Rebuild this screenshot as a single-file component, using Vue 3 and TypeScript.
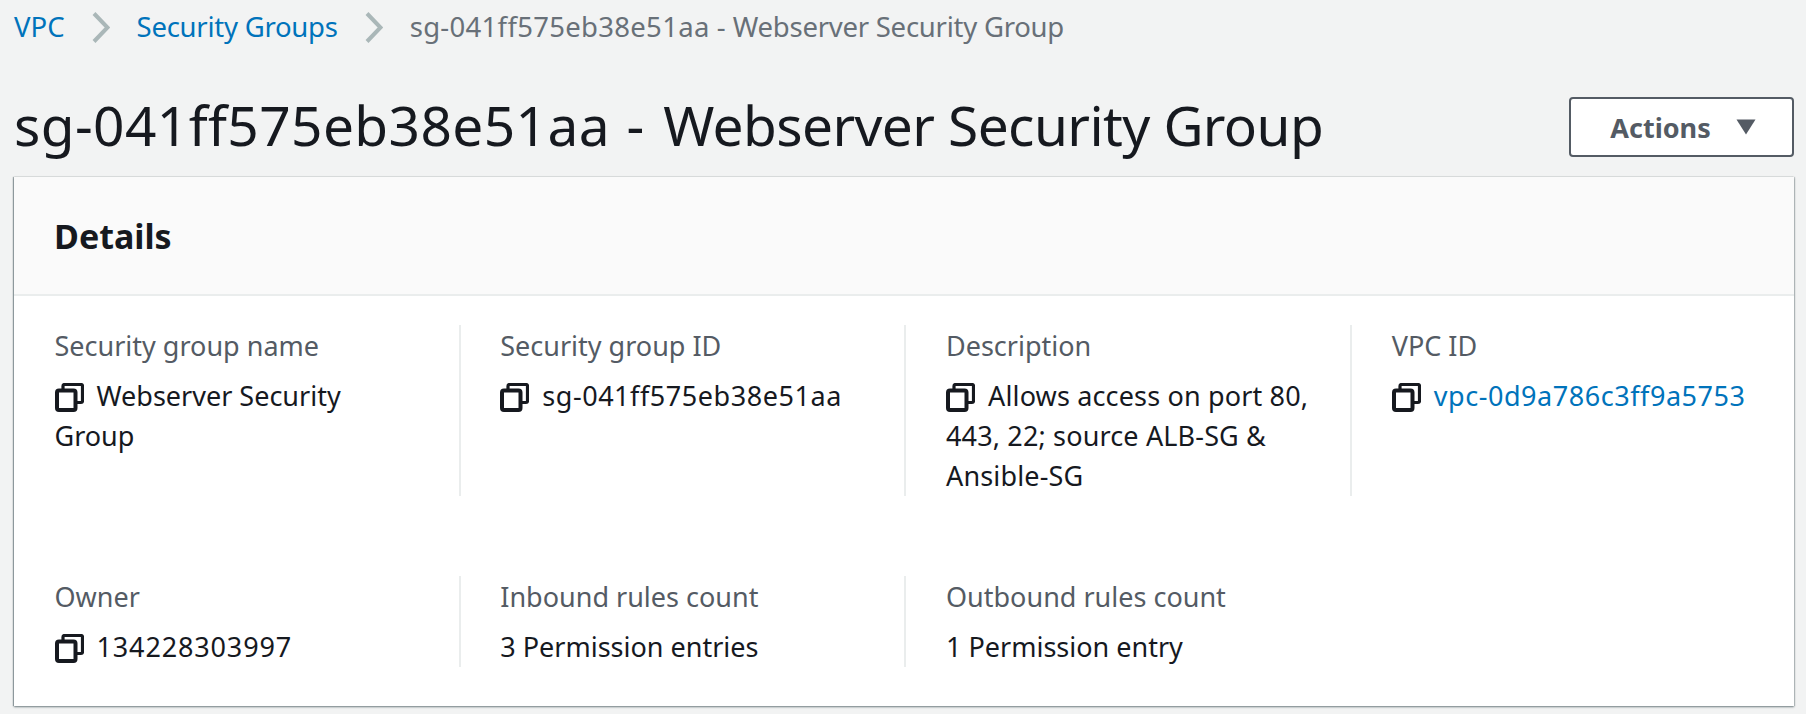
<script setup lang="ts">
interface Cell {
  label: string
  lines: string
  copy?: boolean
  link?: boolean
  track?: string
}
const rowOne: Cell[] = [
  { label: 'Security group name', lines: 'Webserver Security Group', copy: true },
  { label: 'Security group ID', lines: 'sg-041ff575eb38e51aa', copy: true, track: 'track-id' },
  { label: 'Description', lines: 'Allows access on port 80, 443, 22; source ALB-SG & Ansible-SG', copy: true, track: 'track-text' },
  { label: 'VPC ID', lines: 'vpc-0d9a786c3ff9a5753', copy: true, link: true, track: 'track-id' },
]
const rowTwo: Cell[] = [
  { label: 'Owner', lines: '134228303997', copy: true, track: 'track-num' },
  { label: 'Inbound rules count', lines: '3 Permission entries' },
  { label: 'Outbound rules count', lines: '1 Permission entry' },
]
const rows = [
  { cells: rowOne, cls: 'row-one' },
  { cells: rowTwo, cls: 'row-two' },
]
</script>

<template>
  <div class="page">
    <nav class="crumbs">
      <a class="link">VPC</a>
      <svg class="chev" width="18" height="31" viewBox="0 0 18 31"><path d="M2 1.500 15.500 15.500 2 29.500" fill="none" stroke="#aab7b8" stroke-width="4" /></svg>
      <a class="link tight">Security Groups</a>
      <svg class="chev" width="18" height="31" viewBox="0 0 18 31"><path d="M2 1.500 15.500 15.500 2 29.500" fill="none" stroke="#aab7b8" stroke-width="4" /></svg>
      <span class="current"><span class="crumb-id">sg-041ff575eb38e51aa</span> - <span class="tight">Webserver Security Group</span></span>
    </nav>
    <header class="head">
      <h1><span class="title-id">sg-041ff575eb38e51aa</span><span class="title-dash"> - </span><span class="title-name">Webserver Security Group</span></h1>
      <button class="actions">
        <span>Actions</span>
        <svg width="20" height="16" viewBox="0 0 20 16"><path d="M0.500 0.500H19.500L10 15.500Z" fill="#545b64" /></svg>
      </button>
    </header>
    <section class="card">
      <div class="card-head"><h2>Details</h2></div>
      <div class="card-body">
        <div v-for="row in rows" :key="row.cls" class="row" :class="row.cls">
          <div v-for="cell in row.cells" :key="cell.label" class="cell">
            <div class="label">{{ cell.label }}</div>
            <div class="value" :class="[{ link: cell.link }, cell.track]">
              <svg v-if="cell.copy" class="copy" width="29" height="29" viewBox="0 0 29 29">
                <path d="M8 6V3A1.500 1.500 0 0 1 9.500 1.500H26A1.500 1.500 0 0 1 27.500 3V18A1.500 1.500 0 0 1 26 19.500H22" fill="none" stroke="#16191f" stroke-width="3.200" />
                <rect x="2" y="7.500" width="18.500" height="19.500" rx="2" fill="none" stroke="#16191f" stroke-width="4" />
              </svg>{{ cell.lines }}
            </div>
          </div>
        </div>
      </div>
    </section>
  </div>
</template>

<style>
html, body { margin: 0; background: #f2f3f3; }
</style>

<style scoped>
.page {
  width: 1806px;
  height: 714px;
  overflow: hidden;
  background: #f2f3f3;
  font-family: "Noto Sans", "Open Sans", sans-serif;
  color: #16191f;
  box-sizing: border-box;
}
.crumbs {
  display: flex;
  align-items: center;
  height: 30px;
  padding: 12px 0 0 14px;
  font-size: 27.500px;
  line-height: 30px;
}
.link { color: #0073bb; }
.tight { letter-spacing: -0.250px; }
.crumb-id { letter-spacing: 0.300px; }
.chev { margin: 0 27px; flex: none; }
.current { color: #687078; white-space: pre-wrap; }
.head {
  display: flex;
  justify-content: space-between;
  align-items: center;
  padding: 54px 12px 0 14px;
  height: 62px;
}
h1 {
  margin: 0;
  font-size: 55px;
  font-weight: 400;
  line-height: 62px;
  white-space: pre;
  position: relative;
  top: -2px;
}
.title-id { letter-spacing: 0.400px; }
.title-dash { letter-spacing: 2.300px; }
.title-name { letter-spacing: -0.600px; }
.actions {
  display: flex;
  align-items: center;
  justify-content: center;
  gap: 25px;
  box-sizing: border-box;
  width: 225px;
  height: 60px;
  background: #fff;
  border: 2px solid #545b64;
  border-radius: 4px;
  font: 700 27px "Noto Sans", sans-serif;
  color: #545b64;
  padding: 0 0 0 3px;
}
.card {
  margin: 19px 12px 0 14px;
  background: #fff;
  box-shadow: 0 1px 2px rgba(0, 28, 36, 0.5), 1px 0 1px rgba(0, 28, 36, 0.15), -1px 0 1px rgba(0, 28, 36, 0.3);
  height: 529px;
}
.card-head {
  height: 119px;
  background: #fafafa;
  border-bottom: 2px solid #eaeded;
  box-sizing: border-box;
  display: flex;
  align-items: center;
  padding-left: 40px;
}
h2 { margin: 0; font-size: 34px; font-weight: 700; }
.card-body { padding: 0 0 0 40.500px; }
.row { display: grid; grid-template-columns: repeat(4, 406px); column-gap: 39.750px; }
.row-one { padding-top: 29px; height: 171px; }
.row-two { padding-top: 80px; height: 90px; }
.cell {
  box-sizing: border-box;
  padding-right: 38px;
  border-right: 2px solid #eaeded;
}
.cell:last-child { border-right: 0; padding-right: 0; }
.label { color: #545b64; font-size: 27px; line-height: 40px; margin-top: 1px; }
.value { font-size: 27px; line-height: 40px; margin-top: 10px; }
.value.link { color: #0073bb; white-space: nowrap; }
.track-id { letter-spacing: 0.550px; }
.track-num { letter-spacing: 0.850px; }
.track-text { letter-spacing: 0.150px; }
.copy { vertical-align: -6px; margin-right: 13px; letter-spacing: 0; }
</style>
